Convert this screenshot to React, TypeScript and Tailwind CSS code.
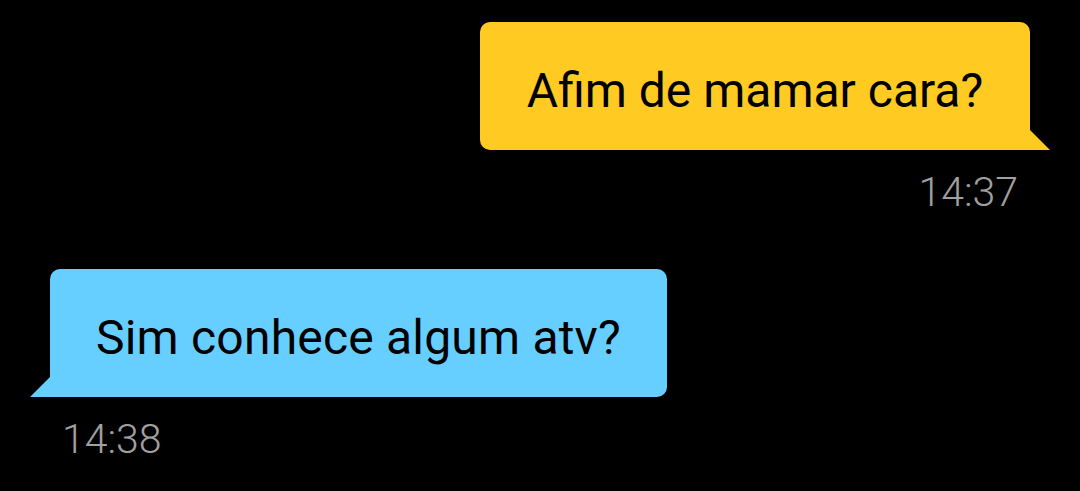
const messages = [
  { id: 1, text: 'Afim de mamar cara?', time: '14:37', mine: true },
  { id: 2, text: 'Sim conhece algum atv?', time: '14:38', mine: false },
];

const Bubble = ({ text, mine }: { text: string; mine: boolean }) => (
  <div
    className={`relative flex h-[128px] items-center justify-center pt-[9px] text-[48px] text-black ${
      mine
        ? 'w-[550px] rounded-[10px] rounded-br-none bg-[#ffcb22]'
        : 'w-[617px] rounded-[10px] rounded-bl-none bg-[#66cfff] tracking-[0.2px]'
    }`}
  >
    <span className="leading-none">{text}</span>
    {/* little tail at the bottom corner */}
    {mine ? (
      <svg className="absolute bottom-0 right-[-20px]" width="20" height="20" viewBox="0 0 20 20">
        <polygon points="0,0 20,20 0,20" fill="#ffcb22" />
      </svg>
    ) : (
      <svg className="absolute bottom-0 left-[-20px]" width="20" height="20" viewBox="0 0 20 20">
        <polygon points="20,0 0,20 20,20" fill="#66cfff" />
      </svg>
    )}
  </div>
);

export default function App() {
  return (
    <div
      className="flex h-[491px] w-[1080px] flex-col bg-black px-[50px] pt-[22px]"
      style={{ fontFamily: 'Roboto, "Noto Sans", sans-serif' }}
    >
      {messages.map((m, i) => (
        <div
          key={m.id}
          className={`flex flex-col ${m.mine ? 'items-end' : 'items-start'} ${i > 0 ? 'mt-[56px]' : ''}`}
        >
          <Bubble text={m.text} mine={m.mine} />
          <div className="mt-[22px] px-[12px] text-[41px] font-light leading-none text-[#a0a0a0]">
            {m.time}
          </div>
        </div>
      ))}
    </div>
  );
}
